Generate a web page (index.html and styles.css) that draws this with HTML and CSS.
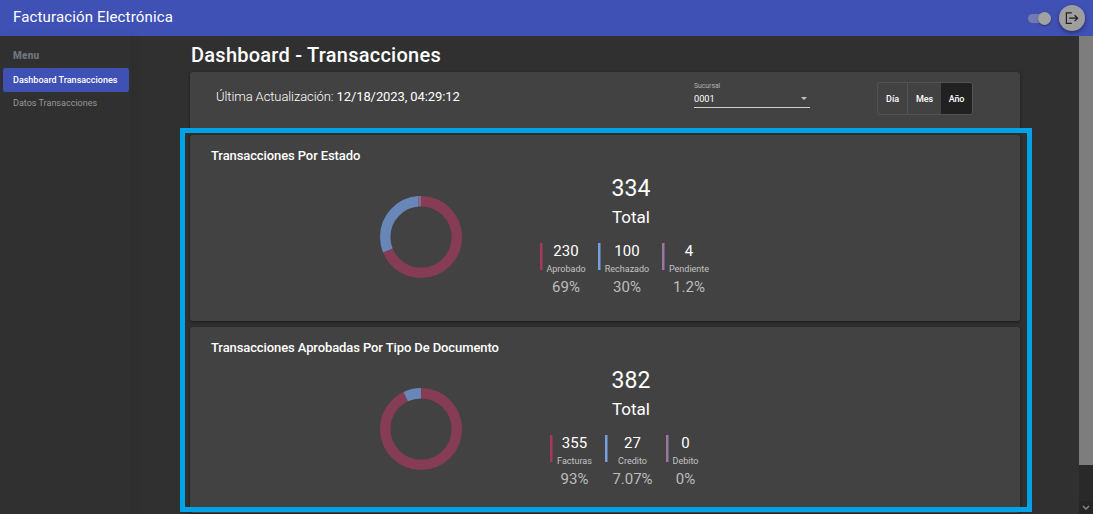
FILE: index.html
```html
<!DOCTYPE html>
<html lang="es">
<head>
<meta charset="utf-8">
<title>Facturación Electrónica</title>
<link rel="stylesheet" href="styles.css">
</head>
<body>
<header class="topbar">
  <span class="brand">Facturación Electrónica</span>
  <span class="switch"><span class="knob"></span></span>
  <button class="logout" aria-label="Salir">
    <svg width="16" height="16" viewBox="0 0 16 16" fill="none" stroke="#202020"><path stroke-width="1.2" d="M7.8 2.9H2.4v10.5h5.4"/><path stroke-width="1.3" d="M5.2 8.2h8M10.6 5.3l3 2.9-3 2.9"/></svg>
  </button>
</header>
<div class="shell">
  <nav class="sidebar">
    <div class="menu-title">Menu</div>
    <a class="menu-item active">Dashboard Transacciones</a>
    <a class="menu-item">Datos Transacciones</a>
  </nav>
  <main class="content">
    <h1 class="title">Dashboard - Transacciones</h1>
    <section class="card filters">
      <div class="updated">Última Actualización: <b>12/18/2023, 04:29:12</b></div>
      <div class="select">
        <span class="select-label">Sucursal</span>
        <div class="select-value"><span>0001</span><i class="arrow"></i></div>
      </div>
      <div class="toggle"><span class="day">Día</span><span class="month">Mes</span><span class="year">Año</span></div>
    </section>
    <section class="card chart">
      <h2 class="card-title">Transacciones Por Estado</h2>
      <div class="chart-body">
        <svg class="donut" width="82" height="82" viewBox="0 0 82 82">
          <g fill="none" stroke-width="10.4" transform="rotate(-90 41 41)">
            <circle cx="41" cy="41" r="35.8" pathLength="334" stroke="#873c55" stroke-dasharray="230 104"/>
            <circle cx="41" cy="41" r="35.8" pathLength="334" stroke="#6887b8" stroke-dasharray="100 234" stroke-dashoffset="-230"/>
            <circle cx="41" cy="41" r="35.8" pathLength="334" stroke="#86698c" stroke-dasharray="4 330" stroke-dashoffset="-330"/>
          </g>
        </svg>
        <div class="summary">
          <div class="total">334</div>
          <div class="total-label">Total</div>
          <div class="stats by-state">
            <div class="stat red"><b>230</b><span>Aprobado</span><em>69%</em></div>
            <div class="stat blue"><b>100</b><span>Rechazado</span><em>30%</em></div>
            <div class="stat purple"><b>4</b><span>Pendiente</span><em>1.2%</em></div>
          </div>
        </div>
      </div>
    </section>
    <section class="card chart">
      <h2 class="card-title">Transacciones Aprobadas Por Tipo De Documento</h2>
      <div class="chart-body">
        <svg class="donut" width="82" height="82" viewBox="0 0 82 82">
          <g fill="none" stroke-width="10.4" transform="rotate(-90 41 41)">
            <circle cx="41" cy="41" r="35.8" pathLength="382" stroke="#873c55" stroke-dasharray="355 27"/>
            <circle cx="41" cy="41" r="35.8" pathLength="382" stroke="#6887b8" stroke-dasharray="27 355" stroke-dashoffset="-355"/>
          </g>
        </svg>
        <div class="summary">
          <div class="total">382</div>
          <div class="total-label">Total</div>
          <div class="stats by-document">
            <div class="stat red"><b>355</b><span>Facturas</span><em>93%</em></div>
            <div class="stat blue"><b>27</b><span>Credito</span><em>7.07%</em></div>
            <div class="stat purple"><b>0</b><span>Debito</span><em>0%</em></div>
          </div>
        </div>
      </div>
    </section>
  </main>
  <div class="scrollbar">
    <div class="thumb"></div>
    <div class="down"><svg width="8" height="6" viewBox="0 0 8 6" fill="none" stroke="#858585" stroke-width="1.5"><path d="M1 1l3 3 3-3"/></svg></div>
  </div>
</div>
<div class="highlight"></div>
</body>
</html>
```
FILE: styles.css
```css
* { box-sizing: border-box; }
body { margin: 0; width: 1093px; height: 514px; overflow: hidden; background: #303030; color: #fff; font-family: Roboto, sans-serif; position: relative; }
.topbar { height: 36px; background: #3f51b5; display: flex; align-items: center; padding: 0 8px 0 13px; }
.brand { flex: 1; font-size: 15px; line-height: 34px; height: 36px; letter-spacing: .15px; }
.switch { width: 23px; height: 9px; border-radius: 5px; background: #727cb1; display: flex; align-items: center; justify-content: flex-end; margin-right: 8px; }
.knob { width: 13px; height: 13px; border-radius: 50%; background: #a2a2a2; box-shadow: 0 1px 2px rgba(0,0,0,.4); flex: none; }
.logout { width: 26px; height: 26px; border: 0; border-radius: 50%; background: #9e9e9e; box-shadow: 0 2px 4px rgba(0,0,0,.4); padding: 0; display: flex; align-items: center; justify-content: center; }
.shell { display: flex; height: 478px; }
.sidebar { width: 132px; border-right: 1px solid #2d2d2d; padding: 14px 2px 0 3px; box-shadow: 2px 0 8px rgba(0,0,0,.06); }
.menu-title { color: #6c757d; font-size: 10px; font-weight: 900; line-height: 12px; letter-spacing: .25px; padding-left: 10px; margin-bottom: 6px; }
.menu-item { display: block; width: 126px; height: 24px; line-height: 24px; padding-left: 10px; font-size: 9px; color: #989898; border-radius: 2px; white-space: nowrap; letter-spacing: .01px; }
.menu-item.active { background: #3f51b5; color: #fff; font-weight: 500; margin-bottom: -1px; letter-spacing: 0; }
.content { width: 830px; margin-left: 58px; }
.title { margin: 0; height: 36px; padding-left: 1px; line-height: 38px; font-size: 20px; font-weight: 500; letter-spacing: .25px; }
.card { background: #424242; border-radius: 3px; box-shadow: 0 1px 3px rgba(0,0,0,.5); margin-bottom: 6px; }
.filters { height: 57px; display: flex; align-items: flex-start; padding-left: 26px; }
.updated { width: 478px; padding-top: 16px; line-height: 18px; font-size: 13px; font-weight: 300; letter-spacing: -.09px; }
.updated b { font-weight: 400; }
.select { width: 116px; height: 36px; padding-top: 9px; border-bottom: 1px solid #d0d0d0; }
.select-label { display: block; font-size: 6.8px; line-height: 10px; color: #b3b3b3; }
.select-value { display: flex; align-items: center; justify-content: space-between; font-size: 9.2px; line-height: 15px; padding-right: 3px; }
.arrow { border: 3px solid transparent; border-top-color: #c5c5c5; border-bottom: 0; }
.toggle { margin: 10px 0 0 67px; display: flex; width: 96px; height: 33px; border: 1px solid #535353; border-radius: 3px; font-size: 9px; font-weight: 500; line-height: 32px; text-align: center; overflow: hidden; letter-spacing: -.1px; }
.day { width: 30px; border-right: 1px solid #535353; }
.month { width: 33px; }
.year { flex: 1; background: #212121; }
.chart { height: 186px; padding: 12px 0 0 21px; }
.card-title { margin: 0; font-size: 13px; font-weight: 500; line-height: 18px; letter-spacing: -.1px; }
.chart-body { display: flex; }
.donut { margin: 31px 0 0 169px; }
.summary { width: 230px; margin-left: 54px; padding-top: 11px; }
.total { text-align: center; font-size: 23px; line-height: 26px; }
.total-label { text-align: center; font-size: 17px; line-height: 20px; padding-top: 5px; }
.stats { display: grid; margin-top: 16px; }
.by-state { grid-template-columns: 52px 58px 54px; column-gap: 6px; margin-left: 24px; }
.by-document { grid-template-columns: 49px 55px 39px; column-gap: 6px; margin-left: 34px; }
.stat { display: flex; flex-direction: column; align-items: center; background: linear-gradient(var(--mark), var(--mark)) left top / 2.5px 27px no-repeat; }
.stat b { font-size: 15px; font-weight: 400; line-height: 17px; }
.stat span { font-size: 9px; line-height: 12px; padding-top: 3px; height: 17px; color: #c4c4c4; }
.stat em { font-size: 15px; font-style: normal; line-height: 20px; color: #bdbdbd; }
.red { --mark: #a9365c; }
.blue { --mark: #769fe0; }
.purple { --mark: #9b76a5; }
.scrollbar { width: 14px; margin-left: auto; background: #292929; display: flex; flex-direction: column; }
.thumb { height: 429px; background: #7d7d7d; }
.down { margin-top: auto; height: 13px; background: #252525; display: flex; justify-content: center; align-items: center; }
.highlight { position: absolute; left: 180px; top: 128px; width: 852px; height: 384px; border: 5px solid #00a2e8; }
```
